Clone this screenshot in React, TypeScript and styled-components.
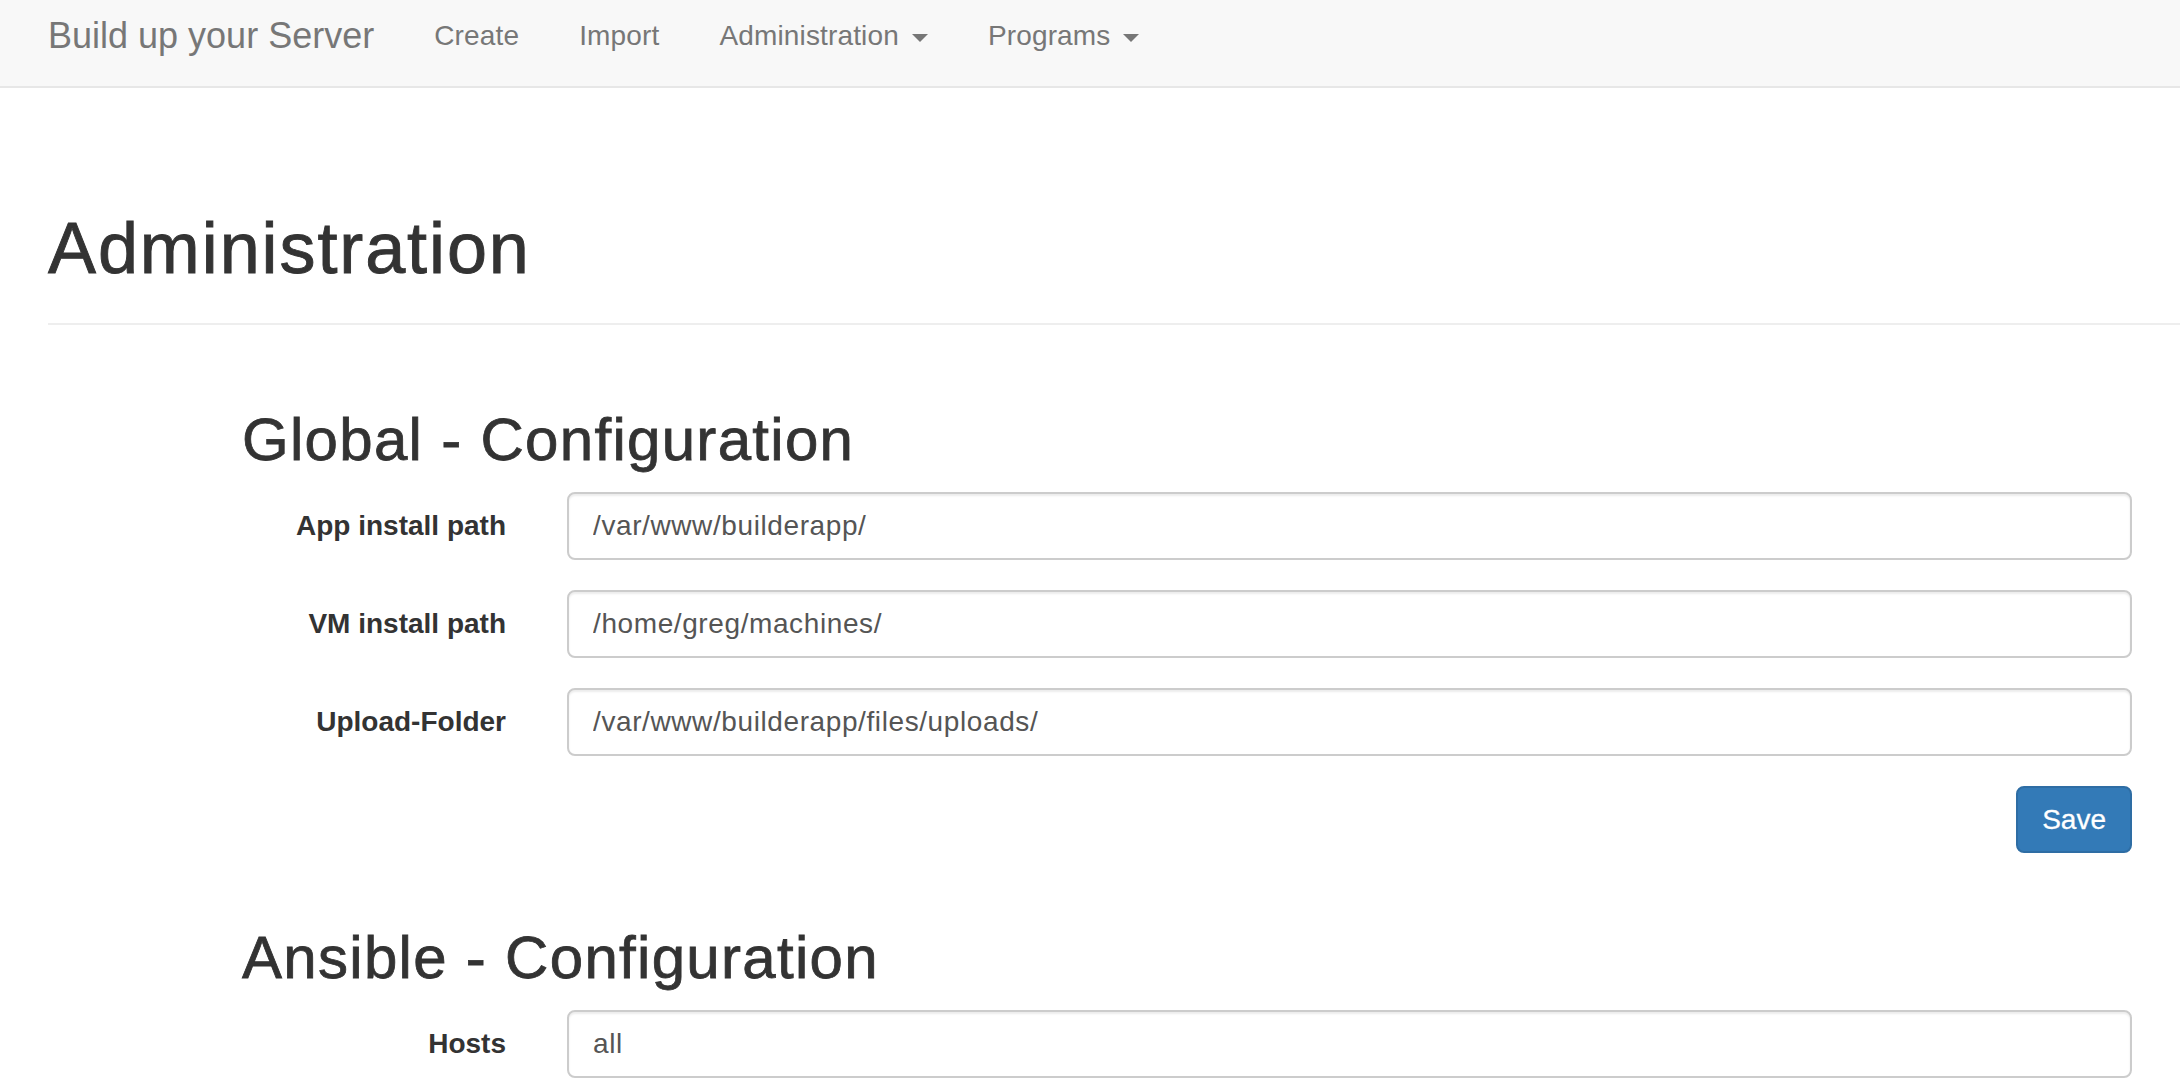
import styled, { createGlobalStyle } from "styled-components";

const GlobalStyle = createGlobalStyle`
  html, body {
    margin: 0;
    padding: 0;
    background: #fff;
  }
  body {
    font-family: "Liberation Sans", Arial, Helvetica, sans-serif;
    color: #333;
  }
  * {
    box-sizing: border-box;
  }
`;

const Navbar = styled.nav`
  display: flex;
  align-items: flex-start;
  height: 88px;
  padding-left: 18px;
  background: #f8f8f8;
  border-bottom: 2px solid #e7e7e7;
`;

const Brand = styled.a`
  padding: 16px 30px;
  font-size: 36px;
  line-height: 40px;
  color: #777;
  text-decoration: none;
  white-space: nowrap;
`;

const NavList = styled.ul`
  display: flex;
  margin: 0;
  padding: 0;
  list-style: none;
`;

const NavLink = styled.a`
  display: block;
  padding: 16px 30px;
  font-size: 28px;
  line-height: 40px;
  letter-spacing: 0.15px;
  color: #777;
  text-decoration: none;
  white-space: nowrap;
`;

const Caret = styled.span`
  display: inline-block;
  width: 0;
  height: 0;
  margin-left: 13px;
  vertical-align: middle;
  border-top: 8px solid #777;
  border-left: 8px solid transparent;
  border-right: 8px solid transparent;
`;

const Main = styled.main`
  padding: 121px 0 0 48px;
`;

const PageHeader = styled.div`
  padding-bottom: 35px;
  border-bottom: 2px solid #eee;
`;

const PageTitle = styled.h1`
  margin: 0;
  font-size: 72px;
  line-height: 1.1;
  font-weight: 400;
  letter-spacing: 1.9px;
  -webkit-text-stroke: 0.9px #333;
  color: #333;
`;

const Sections = styled.div`
  display: flex;
  flex-direction: column;
  gap: 72px;
  padding: 82px 48px 0 194px;
`;

const SectionTitle = styled.h2`
  margin: 0 0 19px;
  font-size: 60px;
  line-height: 66px;
  font-weight: 400;
  letter-spacing: 1.3px;
  -webkit-text-stroke: 0.8px #333;
  color: #333;
`;

const FormRow = styled.div`
  display: grid;
  grid-template-columns: 264px 1fr;
  column-gap: 61px;
  margin-bottom: 30px;

  &:last-child {
    margin-bottom: 0;
  }
`;

const Label = styled.label`
  padding-top: 14px;
  text-align: right;
  font-size: 28px;
  line-height: 40px;
  font-weight: 700;
  color: #333;
  white-space: nowrap;
`;

const TextInput = styled.input`
  display: block;
  width: 100%;
  height: 68px;
  padding: 12px 24px;
  font-family: inherit;
  font-size: 28px;
  line-height: 40px;
  letter-spacing: 0.6px;
  color: #555;
  background: #fff;
  border: 2px solid #ccc;
  border-radius: 8px;
  box-shadow: inset 0 2px 2px rgba(0, 0, 0, 0.075);
  outline: none;
`;

const Actions = styled.div`
  display: flex;
  justify-content: flex-end;
`;

const PrimaryButton = styled.button`
  height: 67px;
  padding: 12px 24px;
  font-family: inherit;
  font-size: 28px;
  line-height: 40px;
  -webkit-text-stroke: 0.3px #fff;
  color: #fff;
  background: #337ab7;
  border: 2px solid #2e6da4;
  border-radius: 8px;
  cursor: pointer;
`;

type Field = { label: string; value: string };

const globalFields: Field[] = [
  { label: "App install path", value: "/var/www/builderapp/" },
  { label: "VM install path", value: "/home/greg/machines/" },
  { label: "Upload-Folder", value: "/var/www/builderapp/files/uploads/" },
];

const ansibleFields: Field[] = [{ label: "Hosts", value: "all" }];

function Fields({ fields }: { fields: Field[] }) {
  return (
    <>
      {fields.map((f) => (
        <FormRow key={f.label}>
          <Label>{f.label}</Label>
          <TextInput type="text" defaultValue={f.value} />
        </FormRow>
      ))}
    </>
  );
}

export default function App() {
  return (
    <>
      <GlobalStyle />
      <Navbar>
        <Brand href="#">Build up your Server</Brand>
        <NavList>
          <li>
            <NavLink href="#">Create</NavLink>
          </li>
          <li>
            <NavLink href="#">Import</NavLink>
          </li>
          <li>
            <NavLink href="#">
              Administration
              <Caret />
            </NavLink>
          </li>
          <li>
            <NavLink href="#">
              Programs
              <Caret />
            </NavLink>
          </li>
        </NavList>
      </Navbar>
      <Main>
        <PageHeader>
          <PageTitle>Administration</PageTitle>
        </PageHeader>
        <Sections>
          <form>
            <SectionTitle>Global - Configuration</SectionTitle>
            <Fields fields={globalFields} />
            <Actions>
              <PrimaryButton type="button">Save</PrimaryButton>
            </Actions>
          </form>
          <form>
            <SectionTitle>Ansible - Configuration</SectionTitle>
            <Fields fields={ansibleFields} />
          </form>
        </Sections>
      </Main>
    </>
  );
}
